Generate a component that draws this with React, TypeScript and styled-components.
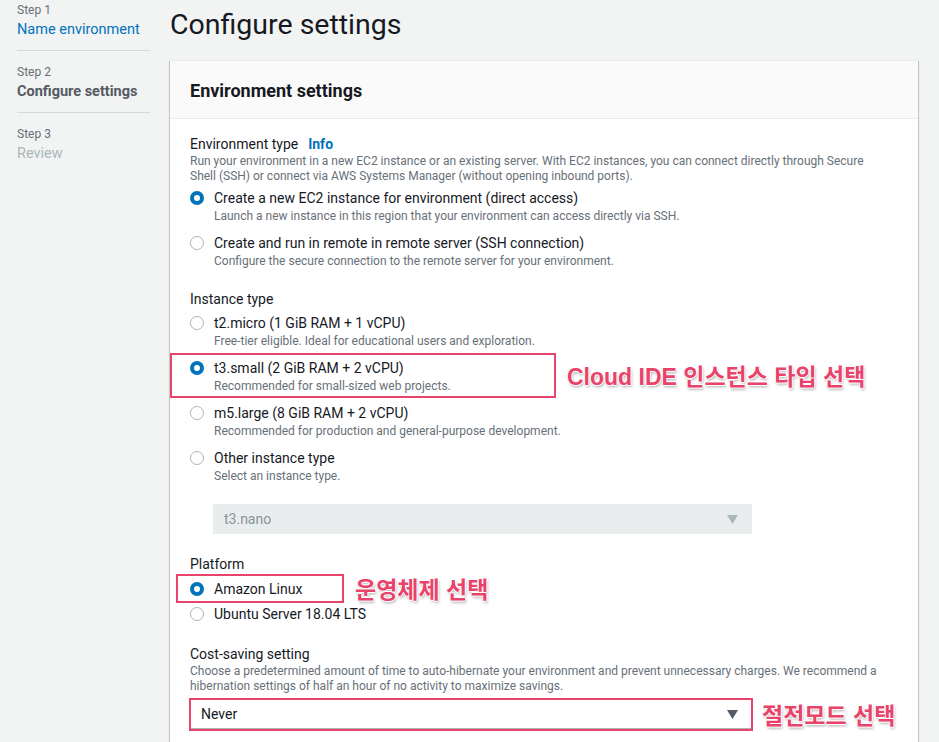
import React from 'react'
import styled, { createGlobalStyle } from 'styled-components'

const GlobalStyle = createGlobalStyle`
  body {
    margin: 0;
    background: #f2f3f3;
    font-family: Roboto, "Noto Sans", sans-serif;
    color: #16191f;
  }
`

const Page = styled.div`
  display: flex;
  align-items: flex-start;
  gap: 20px;
  padding: 0 21px 0 17px;
`

const Sidebar = styled.nav`
  width: 133px;
  flex: none;
`

const Step = styled.div`
  padding: 12px 0 9px;
  border-bottom: 1px solid #d5dbdb;
  &:first-child { padding-top: 1px; }
  &:last-child { border-bottom: none; }
`

const StepLabel = styled.div`
  font-size: 12px;
  line-height: 18px;
  color: #687078;
`

const StepName = styled.div<{ $state: 'link' | 'current' | 'disabled' }>`
  font-size: 14.5px;
  line-height: 22px;
  font-weight: ${p => (p.$state === 'current' ? 700 : 400)};
  color: ${p =>
    p.$state === 'link' ? '#0073bb' : p.$state === 'current' ? '#545b64' : '#aab7b8'};
`

const Main = styled.main`
  flex: 1;
  min-width: 0;
`

const Title = styled.h1`
  margin: 0;
  padding-top: 7px;
  font-size: 28.5px;
  line-height: 36px;
  font-weight: 400;
`

const Card = styled.section`
  margin-top: 17px;
  background: #fff;
  border-top: 1px solid #eaeded;
  box-shadow: 0 1px 1px 0 rgba(0, 28, 36, 0.3), 1px 1px 1px 0 rgba(0, 28, 36, 0.15),
    -1px 1px 1px 0 rgba(0, 28, 36, 0.15);
`

const CardHeader = styled.header`
  background: #fafafa;
  padding: 19px 20px 16px;
  border-bottom: 1px solid #eaeded;
  h2 {
    margin: 0;
    font-size: 18px;
    line-height: 22px;
    font-weight: 700;
  }
`

const CardBody = styled.div`
  display: flex;
  flex-direction: column;
  gap: 20px;
  padding: 15px 20px 40px;
`

const Field = styled.div``

const FieldLabel = styled.div`
  font-size: 14px;
  line-height: 20px;
`

const InfoLink = styled.span`
  margin-left: 10px;
  font-weight: 700;
  color: #0073bb;
`

const FieldDesc = styled.div`
  font-size: 12px;
  line-height: 15px;
  color: #687078;
`

const RadioGroup = styled.div<{ $gap: number; $top: number }>`
  display: flex;
  flex-direction: column;
  gap: ${p => p.$gap}px;
  margin-top: ${p => p.$top}px;
`

const Option = styled.div`
  position: relative;
  display: grid;
  grid-template-columns: 14px 1fr;
  column-gap: 10px;
`

const Radio = styled.span<{ $checked?: boolean }>`
  box-sizing: border-box;
  width: 14px;
  height: 14px;
  margin-top: 3px;
  border-radius: 50%;
  background: #fff;
  border: ${p => (p.$checked ? '4px solid #0073bb' : '1.5px solid #aab7b8')};
`

const OptionLabel = styled.div`
  font-size: 14px;
  line-height: 20px;
`

const OptionDesc = styled.div`
  font-size: 12px;
  line-height: 16px;
  color: #687078;
`

const SelectBox = styled.div<{ $disabled?: boolean }>`
  box-sizing: border-box;
  display: flex;
  align-items: center;
  justify-content: space-between;
  height: 30px;
  padding: 0 13px 0 10px;
  font-size: 14px;
  background: ${p => (p.$disabled ? '#eaeded' : '#fff')};
  border: 1px solid ${p => (p.$disabled ? '#eaeded' : '#aab7b8')};
  color: ${p => (p.$disabled ? '#879596' : '#16191f')};
`

const NestedSelect = styled.div`
  width: 539px;
  margin: 20px 0 0 -1px;
`

const CostSelect = styled.div`
  position: relative;
  width: 562px;
  margin-top: 5px;
`

const Highlight = styled.div<{ $top: number; $bottom: number; $left: number; $right?: number; $width?: number }>`
  position: absolute;
  top: ${p => p.$top}px;
  bottom: ${p => p.$bottom}px;
  left: ${p => p.$left}px;
  ${p => (p.$width ? `width: ${p.$width}px;` : `right: ${p.$right ?? 0}px;`)}
  border: 2px solid #e9436b;
  box-sizing: border-box;
  pointer-events: none;
`

const Note = styled.span<{ $gap: number }>`
  position: absolute;
  left: calc(100% + ${p => p.$gap}px);
  top: 50%;
  transform: translateY(-52%);
  white-space: nowrap;
  font-family: "Liberation Sans", "Noto Sans CJK KR", sans-serif;
  font-size: 23px;
  font-weight: 700;
  color: #e9436b;
  text-shadow: 1px 0 0 #fff, -1px 0 0 #fff, 0 1px 0 #fff, 0 -1px 0 #fff,
    1px 2px 3px rgba(0, 0, 0, 0.35);
`

function Caret({ color }: { color: string }) {
  return (
    <svg width="11" height="9" viewBox="0 0 11 9">
      <polygon points="0,0 11,0 5.5,9" fill={color} />
    </svg>
  )
}

type Opt = { label: string; desc?: string; checked?: boolean }

const envOptions: Opt[] = [
  {
    label: 'Create a new EC2 instance for environment (direct access)',
    desc: 'Launch a new instance in this region that your environment can access directly via SSH.',
    checked: true,
  },
  {
    label: 'Create and run in remote in remote server (SSH connection)',
    desc: 'Configure the secure connection to the remote server for your environment.',
  },
]

function RadioOption({ opt, children }: { opt: Opt; children?: React.ReactNode }) {
  return (
    <Option>
      <Radio $checked={opt.checked} />
      <div>
        <OptionLabel>{opt.label}</OptionLabel>
        {opt.desc && <OptionDesc>{opt.desc}</OptionDesc>}
        {children}
      </div>
    </Option>
  )
}

export default function App() {
  return (
    <>
      <GlobalStyle />
      <Page>
        <Sidebar>
          <Step>
            <StepLabel>Step 1</StepLabel>
            <StepName $state="link">Name environment</StepName>
          </Step>
          <Step>
            <StepLabel>Step 2</StepLabel>
            <StepName $state="current">Configure settings</StepName>
          </Step>
          <Step>
            <StepLabel>Step 3</StepLabel>
            <StepName $state="disabled">Review</StepName>
          </Step>
        </Sidebar>

        <Main>
          <Title>Configure settings</Title>
          <Card>
            <CardHeader>
              <h2>Environment settings</h2>
            </CardHeader>
            <CardBody>
              <Field>
                <FieldLabel>
                  Environment type<InfoLink>Info</InfoLink>
                </FieldLabel>
                <FieldDesc>
                  Run your environment in a new EC2 instance or an existing server. With EC2 instances, you can connect directly through Secure
                  <br />
                  Shell (SSH) or connect via AWS Systems Manager (without opening inbound ports).
                </FieldDesc>
                <RadioGroup $gap={9} $top={4}>
                  {envOptions.map(o => (
                    <RadioOption key={o.label} opt={o} />
                  ))}
                </RadioGroup>
              </Field>

              <Field>
                <FieldLabel>Instance type</FieldLabel>
                <RadioGroup $gap={9} $top={4}>
                  <RadioOption opt={{ label: 't2.micro (1 GiB RAM + 1 vCPU)', desc: 'Free-tier eligible. Ideal for educational users and exploration.' }} />
                  <Option>
                    <Radio $checked />
                    <div>
                      <OptionLabel>t3.small (2 GiB RAM + 2 vCPU)</OptionLabel>
                      <OptionDesc>Recommended for small-sized web projects.</OptionDesc>
                    </div>
                    <Highlight $top={-5} $bottom={-4} $left={-20} $width={386}>
                      <Note $gap={13}>Cloud IDE 인스턴스 타입 선택</Note>
                    </Highlight>
                  </Option>
                  <RadioOption opt={{ label: 'm5.large (8 GiB RAM + 2 vCPU)', desc: 'Recommended for production and general-purpose development.' }} />
                  <RadioOption opt={{ label: 'Other instance type', desc: 'Select an instance type.' }}>
                    <NestedSelect>
                      <SelectBox $disabled>
                        <span>t3.nano</span>
                        <Caret color="#aab7b8" />
                      </SelectBox>
                    </NestedSelect>
                  </RadioOption>
                </RadioGroup>
              </Field>

              <Field>
                <FieldLabel>Platform</FieldLabel>
                <RadioGroup $gap={5} $top={5}>
                  <Option>
                    <Radio $checked />
                    <OptionLabel>Amazon Linux</OptionLabel>
                    <Highlight $top={-5} $bottom={-4} $left={-14} $width={168}>
                      <Note $gap={13}>운영체제 선택</Note>
                    </Highlight>
                  </Option>
                  <RadioOption opt={{ label: 'Ubuntu Server 18.04 LTS' }} />
                </RadioGroup>
              </Field>

              <Field>
                <FieldLabel>Cost-saving setting</FieldLabel>
                <FieldDesc>
                  Choose a predetermined amount of time to auto-hibernate your environment and prevent unnecessary charges. We recommend a
                  <br />
                  hibernation settings of half an hour of no activity to maximize savings.
                </FieldDesc>
                <CostSelect>
                  <SelectBox>
                    <span>Never</span>
                    <Caret color="#545b64" />
                  </SelectBox>
                  <Highlight $top={-1} $bottom={-2} $left={-1} $right={-1}>
                    <Note $gap={11}>절전모드 선택</Note>
                  </Highlight>
                </CostSelect>
              </Field>
            </CardBody>
          </Card>
        </Main>
      </Page>
    </>
  )
}
